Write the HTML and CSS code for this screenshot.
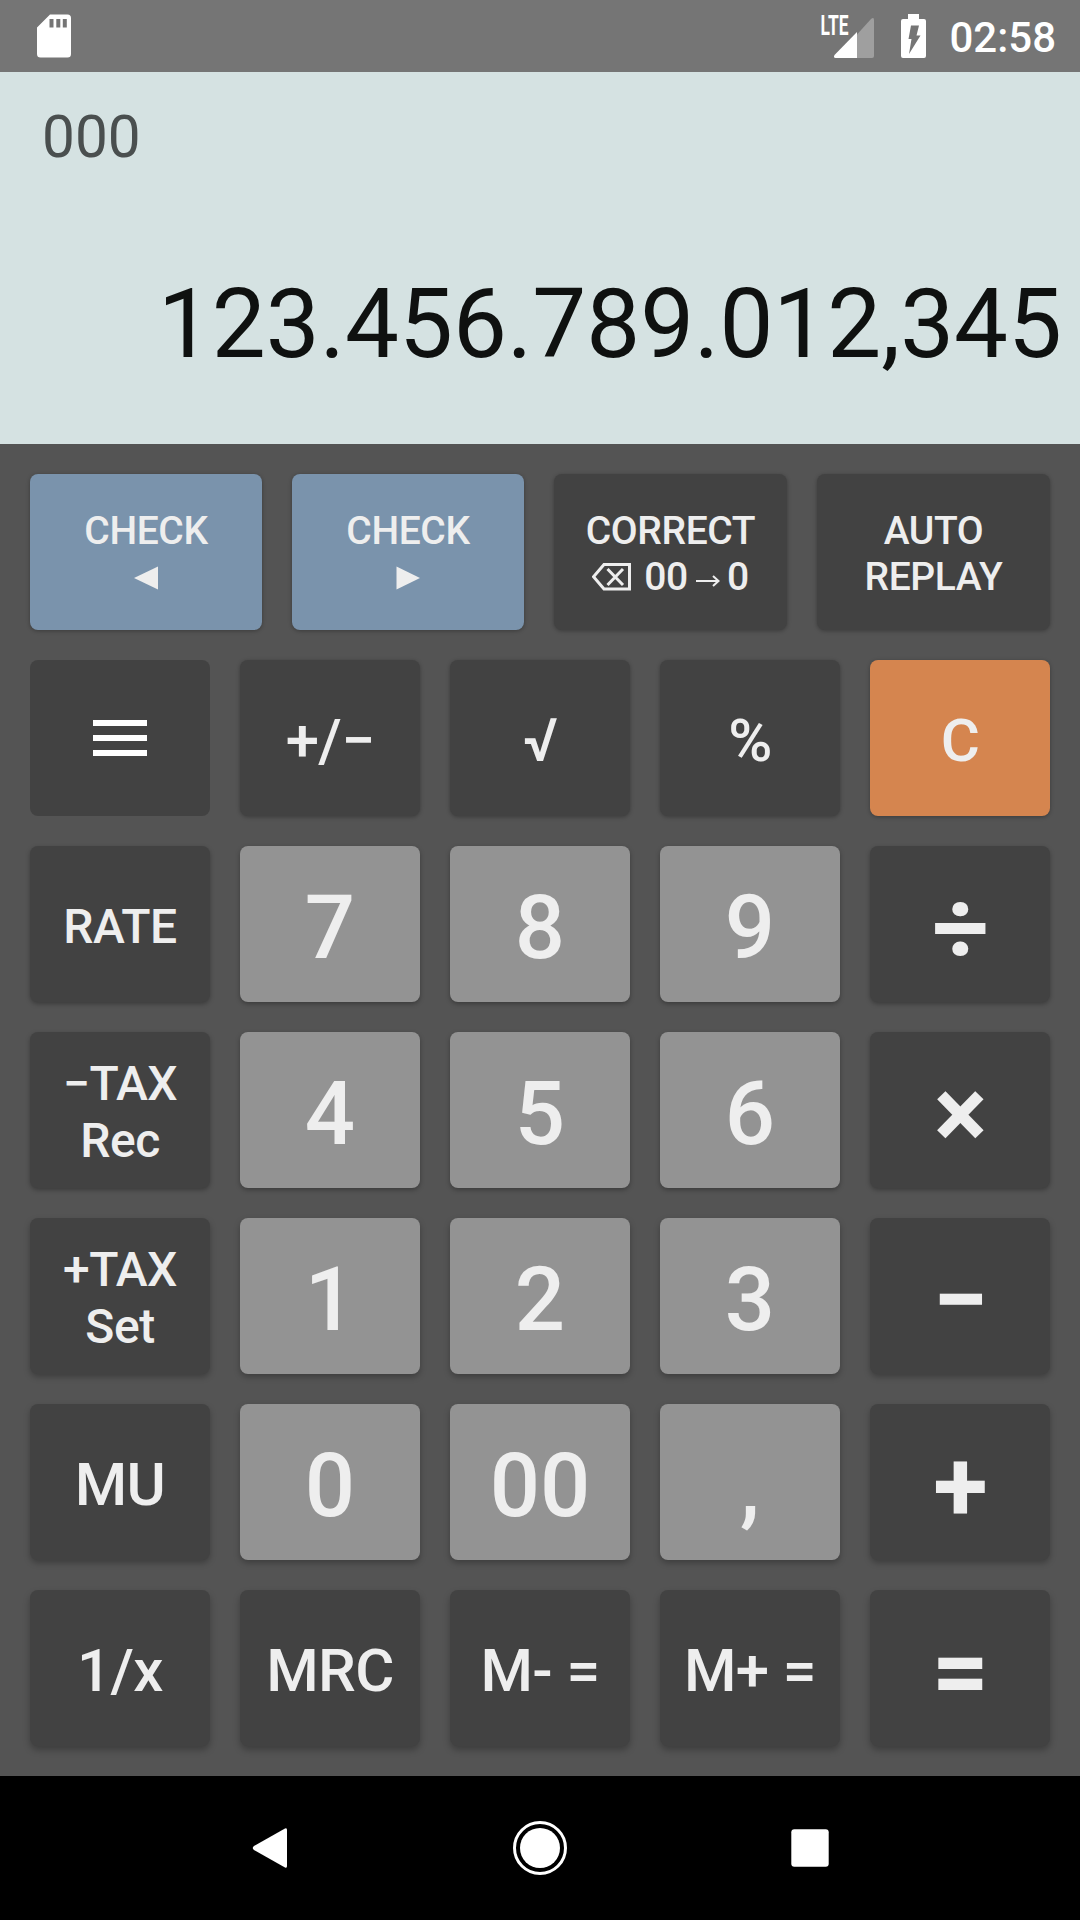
FILE: index.html
```html
<!DOCTYPE html>
<html lang="en">
<head>
    <meta charset="UTF-8">
    <meta name="viewport" content="width=device-width, initial-scale=1.0">
    <title>Calculator</title>
    <link rel="stylesheet" href="styles.css">
</head>
<body>

    <header class="status-bar">
        <svg class="sd-icon" width="36" height="44" viewBox="0 0 36 44">
            <path fill="#fff" fill-rule="evenodd" d="M14 0.5H31.5Q35 0.5 35 4V40Q35 43.5 31.5 43.5H4.500Q1 43.500 1 40V13.500ZM13.500 5V13.500H17.500V5ZM20.300 5V13.500H24.300V5ZM26.800 5V13.500H30.800V5Z"/>
        </svg>
        <div class="status-right">
            <svg class="signal-icon" width="58" height="48" viewBox="-4 -4 58 48">
                <path fill="#9f9f9f" d="M37 19.500L51 4Q54 1.500 54 5V41Q54 43 52 43H37Z"/>
                <path fill="#fff" d="M37 17V43H15.500Q13 42.500 14.500 40Z"/>
                <text class="lte" x="0.500" y="19.800" textLength="28" lengthAdjust="spacingAndGlyphs">LTE</text>
            </svg>
            <svg class="battery-icon" width="26" height="44" viewBox="0 0 26 44">
                <path fill="#fff" d="M8 0H19V5H24Q26 5 26 7V42Q26 44 24 44H3Q1 44 1 42V7Q1 5 3 5H8Z"/>
                <path fill="#757575" d="M11 11.500H19L16.500 21.500H20.500L9 40L11.500 25H8.500Z"/>
            </svg>
            <span class="clock">02:58</span>
        </div>
    </header>

    <section class="display">
        <div class="memo">000</div>
        <div class="result">123.456.789.012,345</div>
    </section>

    <main class="keypad">
        <div class="row row1">
            <button class="key small blue">CHECK
                <span class="line"><svg class="triangle" width="24" height="24" viewBox="0 0 24 24"><path d="M0 12L24 0.500V23.500Z"/></svg></span>
            </button>
            <button class="key small blue">CHECK
                <span class="line"><svg class="triangle" width="24" height="24" viewBox="0 0 24 24"><path d="M24 12L0.500 0.500V23.500Z"/></svg></span>
            </button>
            <button class="key small">CORRECT
                <span class="line">
                    <svg class="erase" width="39" height="28" viewBox="0 0 39 28">
                        <path class="stroke" d="M12 1.500H37.500V26H12L1.500 13.700ZM15.500 6L31 22M31 6L15.500 22"/>
                    </svg>
                    <span>00</span>
                    <svg class="arrow" width="24" height="12" viewBox="0 0 24 12">
                        <path class="stroke thin" d="M0 6H22M17 1L22.500 6L17 11"/>
                    </svg>
                    <span>0</span>
                </span>
            </button>
            <button class="key small">AUTO<br>REPLAY</button>
        </div>
        <div class="row row2">
            <button class="key flat">
                <span class="menu"><i></i><i></i><i></i></span>
            </button>
            <button class="key">+/−</button>
            <button class="key">√</button>
            <button class="key">%</button>
            <button class="key orange">C</button>
        </div>
        <div class="row row3">
            <button class="key medium">RATE</button>
            <button class="key digit">7</button>
            <button class="key digit">8</button>
            <button class="key digit">9</button>
            <button class="key operator">÷</button>
        </div>
        <div class="row row4">
            <button class="key medium">−TAX<br>Rec</button>
            <button class="key digit">4</button>
            <button class="key digit">5</button>
            <button class="key digit">6</button>
            <button class="key operator">×</button>
        </div>
        <div class="row row5">
            <button class="key medium">+TAX<br>Set</button>
            <button class="key digit">1</button>
            <button class="key digit">2</button>
            <button class="key digit">3</button>
            <button class="key operator">−</button>
        </div>
        <div class="row row6">
            <button class="key">MU</button>
            <button class="key digit">0</button>
            <button class="key digit">00</button>
            <button class="key digit">,</button>
            <button class="key operator">+</button>
        </div>
        <div class="row row7">
            <button class="key">1/x</button>
            <button class="key">MRC</button>
            <button class="key">M- =</button>
            <button class="key">M+ =</button>
            <button class="key operator">=</button>
        </div>
    </main>

    <nav class="nav-bar">
        <svg width="54" height="54" viewBox="0 0 54 54">
            <path d="M42 7.500Q44 6.500 44 9V45Q44 47.500 42 46.500L11 29Q8.500 27 11 25Z"/>
        </svg>
        <svg width="54" height="54" viewBox="0 0 54 54">
            <circle class="ring" cx="27" cy="27" r="25.500"/>
            <circle cx="27" cy="27" r="20"/>
        </svg>
        <svg width="54" height="54" viewBox="0 0 54 54">
            <rect x="8.300" y="8.300" width="37.400" height="37.400" rx="3"/>
        </svg>
    </nav>

</body>
</html>
```

FILE: styles.css
```css
* {
    box-sizing: border-box;
}
body {
    margin: 0;
    width: 1080px;
    height: 1920px;
    display: flex;
    flex-direction: column;
    font-family: Roboto, sans-serif;
    background: #000;
    overflow: hidden;
}
svg {
    display: block;
    flex: none;
}

/* status bar */
.status-bar {
    height: 72px;
    padding: 0 24px 0 36px;
    display: flex;
    align-items: center;
    justify-content: space-between;
    background: #757575;
    color: #fff;
}
.status-right {
    display: flex;
    align-items: center;
}
.signal-icon {
    margin: 0 26px 2px 0;
}
.battery-icon {
    margin-right: 23px;
}
.lte {
    font-size: 27px;
    font-weight: 700;
    fill: #fff;
}
.clock {
    font-size: 42px;
    font-weight: 500;
    line-height: 68px;
    padding-top: 4px;
}

/* display */
.display {
    height: 372px;
    padding: 30px 18px 0 42px;
    background: #d5e2e2;
}
.memo {
    font-size: 58.5px;
    line-height: 70px;
    color: #4a4f4f;
}
.result {
    margin-top: 96px;
    font-size: 96px;
    line-height: 112px;
    text-align: right;
    color: #0f1110;
}

/* keys */
.keypad {
    height: 1332px;
    padding: 30px;
    display: flex;
    flex-direction: column;
    gap: 30px;
    background: #545454;
}
.row {
    height: 156px;
    display: grid;
    grid-template-columns: repeat(5, 180px);
    gap: 30px;
}
.row1 {
    grid-template-columns: 232px 232px 233px 233px;
}
.key {
    min-width: 0;
    display: block;
    margin: 0;
    padding: 0.1em 0 0;
    border: none;
    border-radius: 8px;
    background: #424242;
    color: #eee;
    font-family: inherit;
    font-size: 60px;
    font-weight: 500;
    line-height: 1.172;
    letter-spacing: -0.01em;
    text-align: center;
    white-space: nowrap;
    box-shadow: 0 1px 4px rgba(0, 0, 0, 0.3);
}
.row3 .key, .row4 .key {
    box-shadow: 0 2px 5px rgba(0, 0, 0, 0.3);
}
.row5 .key, .row6 .key {
    box-shadow: 0 3px 6px rgba(0, 0, 0, 0.27);
}
.row7 .key {
    box-shadow: 0 4px 7px rgba(0, 0, 0, 0.27);
}
.row .flat {
    box-shadow: none;
    padding: 0;
}
.key.small {
    font-size: 39px;
    line-height: 46px;
    padding-top: 3px;
}
.key.medium {
    font-size: 48px;
    line-height: 57px;
    padding-top: 4px;
}
.key.digit {
    font-size: 88.5px;
    letter-spacing: 0;
    background: #939393;
}
.key.operator {
    font-size: 100px;
    font-weight: 700;
    padding-top: 8px;
}
.key.blue {
    background: #7a93ac;
}
.key.orange {
    background: #d5854f;
}
.key svg {
    fill: #eee;
}
.key .stroke {
    fill: none;
    stroke: #eee;
    stroke-width: 3;
}
.key .thin {
    stroke-width: 2;
}
.line {
    height: 46px;
    display: flex;
    align-items: center;
    justify-content: center;
}
.triangle {
    margin-top: 2px;
}
.erase {
    margin-right: 13px;
}
.arrow {
    margin: 8px 7px 0 8px;
}
.menu {
    display: flex;
    flex-direction: column;
    align-items: center;
    gap: 9px;
}
.menu i {
    width: 54px;
    height: 6px;
    background: #fff;
}

/* navigation bar */
.nav-bar {
    height: 144px;
    padding: 0 243px;
    display: flex;
    align-items: center;
    justify-content: space-between;
    background: #000;
}
.nav-bar svg {
    fill: #fff;
}
.nav-bar .ring {
    fill: none;
    stroke: #fff;
    stroke-width: 3;
}
```
